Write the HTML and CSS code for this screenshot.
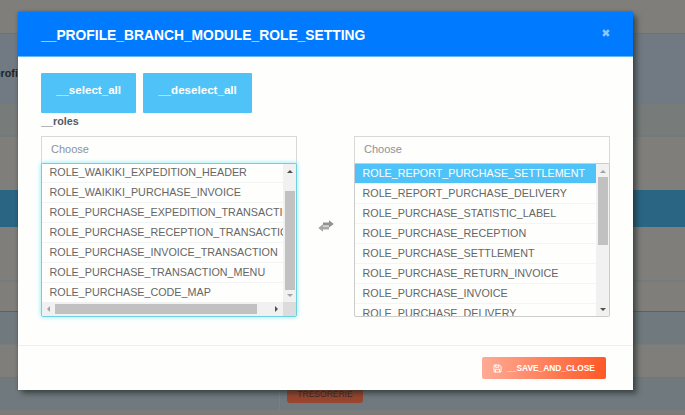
FILE: index.html
```html
<!DOCTYPE html>
<html lang="en">
<head>
<meta charset="utf-8">
<title>Role setting</title>
<link rel="stylesheet" href="styles.css">
</head>
<body>
<div class="page">
  <div class="band band-top"></div>
  <div class="band band-profile"><span>profile</span></div>
  <div class="band band-tools"></div>
  <div class="band band-plain"></div>
  <div class="band band-active"></div>
  <div class="band band-space"></div>
  <div class="band band-head"></div>
  <div class="band band-odd"></div>
  <div class="band band-even"></div>
  <div class="band band-odd band-tag"><div class="cell"><span class="tag">TRESORERIE</span></div></div>
  <div class="band band-last"></div>
</div>
<div class="modal">
  <header class="modal-header">
    <h1>__PROFILE_BRANCH_MODULE_ROLE_SETTING</h1>
    <svg class="close" viewBox="0 0 8 8"><path d="M1.2 1.2 6.8 6.8M6.8 1.2 1.2 6.8"/></svg>
  </header>
  <main class="modal-body">
    <div class="actions"><button class="select">__select_all</button><button class="deselect">__deselect_all</button></div>
    <label class="label">__roles</label>
    <div class="picker">
      <section class="side">
        <div class="search">Choose</div>
        <div class="list focused">
          <div class="rows">
            <div>ROLE_WAIKIKI_EXPEDITION_HEADER</div>
            <div>ROLE_WAIKIKI_PURCHASE_INVOICE</div>
            <div>ROLE_PURCHASE_EXPEDITION_TRANSACTION</div>
            <div>ROLE_PURCHASE_RECEPTION_TRANSACTION</div>
            <div>ROLE_PURCHASE_INVOICE_TRANSACTION</div>
            <div>ROLE_PURCHASE_TRANSACTION_MENU</div>
            <div>ROLE_PURCHASE_CODE_MAP</div>
          </div>
          <div class="vbar">
            <svg class="arrow dark" viewBox="0 0 6 3"><path d="M0 3 3 0 6 3z"/></svg>
            <i class="thumb"></i>
            <svg class="arrow" viewBox="0 0 6 3"><path d="M0 0H6L3 3z"/></svg>
          </div>
          <div class="hbar">
            <svg class="arrow-h" viewBox="0 0 3 6"><path d="M3 0V6L0 3z"/></svg>
            <i class="hthumb"></i>
            <svg class="arrow-h dark" viewBox="0 0 3 6"><path d="M0 0V6L3 3z"/></svg>
          </div>
          <div class="corner"></div>
        </div>
      </section>
      <svg class="swap" viewBox="0 0 16 12"><path class="front" d="M5 2.5H11V.2L15.8 4 11 7.6V5.4H5z"/><path class="back" d="M11 6.5H5V4.3L.2 8 5 11.8V9.5H11z"/></svg>
      <section class="side">
        <div class="search">Choose</div>
        <div class="list">
          <div class="rows">
            <div class="selected">ROLE_REPORT_PURCHASE_SETTLEMENT</div>
            <div>ROLE_REPORT_PURCHASE_DELIVERY</div>
            <div>ROLE_PURCHASE_STATISTIC_LABEL</div>
            <div>ROLE_PURCHASE_RECEPTION</div>
            <div>ROLE_PURCHASE_SETTLEMENT</div>
            <div>ROLE_PURCHASE_RETURN_INVOICE</div>
            <div>ROLE_PURCHASE_INVOICE</div>
            <div>ROLE_PURCHASE_DELIVERY</div>
          </div>
          <div class="vbar">
            <svg class="arrow" viewBox="0 0 6 3"><path d="M0 3 3 0 6 3z"/></svg>
            <i class="thumb"></i>
            <svg class="arrow dark" viewBox="0 0 6 3"><path d="M0 0H6L3 3z"/></svg>
          </div>
        </div>
      </section>
    </div>
  </main>
  <footer class="modal-footer">
    <button class="save"><svg viewBox="0 0 9 9"><path d="M1 1H6.5L8 2.5V8H1zM2.7 1V3.3H5.8V1M2.5 8V5.3H6.5V8"/></svg><span>__SAVE_AND_CLOSE</span></button>
  </footer>
</div>
</body>
</html>
```
FILE: styles.css
```css
* { box-sizing: border-box; }
body { margin: 0; width: 685px; height: 415px; overflow: hidden; background: #7f7e7b; font-family: "Liberation Sans", Arial, sans-serif; }
button { font-family: inherit; border: 0; margin: 0; padding: 0; }
.band { width: 100%; }
.band-top { height: 33px; background: #7f7e7b; }
.band-profile { height: 70px; background: #717a82; border-top: 1px solid #6b7579; font-size: 10.75px; font-weight: bold; color: #202325; line-height: 12px; padding-top: 33px; }
.band-profile span { display: block; margin-left: -6px; }
.band-tools { height: 34px; background: #777b7a; border-top: 1px solid #727a7d; border-bottom: 2px solid #727a7e; }
.band-plain { height: 53px; background: #7f7e7b; }
.band-active { height: 37px; background: #2a6583; }
.band-space { height: 54px; background: #7f7e7b; border-bottom: 1px solid #747b7d; }
.band-head { height: 31px; background: #7f7e7b; border-top: 1px solid #747b7d; border-bottom: 1px solid #5d6060; }
.band-odd { height: 33px; background: #707a7e; border-bottom: 1px solid #787c7c; }
.band-even { height: 33px; background: #7f7e7b; border-bottom: 1px solid #6d777b; }
.band-last { height: 7px; background: #7c7c7a; }
.cell { margin-left: 279px; height: 32px; padding: 7px 0 0 7px; border-left: 1px solid #7a8081; }
.tag { display: block; width: 76px; height: 18px; border-radius: 3px; background: #99452f; color: #3c2a25; font-size: 8.5px; line-height: 19px; text-align: center; }
.modal { position: absolute; left: 18px; top: 12px; width: 615px; height: 378px; display: flex; flex-direction: column; background: #fefefd; box-shadow: 4px 4px 5px rgba(25,35,35,.5), 0 0 3px rgba(30,35,35,.4); }
.modal-header { height: 45px; display: flex; justify-content: space-between; align-items: center; padding: 0 23px; background: #007bff; border-bottom: 1px solid #66b9ef; }
h1 { margin: 0; padding-top: 1px; font-size: 13.83px; line-height: 16px; color: #fff; white-space: nowrap; }
.close { width: 8px; height: 8px; margin-top: -2px; fill: none; stroke: #8fc5fb; stroke-width: 2.6; }
.modal-body { height: 288px; padding: 16px 23px 0; }
.actions { display: flex; gap: 7px; height: 40px; }
.actions button { height: 40px; padding-bottom: 8px; border-radius: 1px; background: #4fc3f7; color: #fff; font-size: 11.6px; font-weight: bold; }
.select { width: 95px; }
.deselect { width: 109px; }
.label { display: block; height: 23px; padding-top: 1px; font-size: 10.75px; line-height: 14px; font-weight: bold; color: #505b66; }
.picker { display: flex; }
.side { width: 256px; flex: none; }
.search { height: 27px; border: 1px solid #d9d9d9; border-bottom: 0; padding-left: 9px; font-size: 11px; line-height: 25px; color: #8a939c; }
.list { display: grid; grid-template-columns: 1fr 13px; height: 154px; border: 1px solid #ccc; border-radius: 0 0 2px 2px; overflow: hidden; }
.rows { overflow: hidden; font-size: 10.75px; line-height: 19px; color: #666; white-space: nowrap; }
.rows div { height: 20px; padding-left: 7.5px; border-bottom: 1px solid #f2f4f5; }
.rows .selected { background: #4fc3f7; color: #fff; }
.focused { grid-template-rows: 138px 14px; border-color: #70cfe0; box-shadow: 0 0 5px #8ceaf5; }
.focused .rows div:first-child { height: 19px; line-height: 17px; }
.vbar { display: flex; flex-direction: column; align-items: center; background: #f1f1f1; padding: 6px 0 5px; }
.arrow { width: 6px; height: 3px; fill: #a3a3a3; flex: none; }
.arrow.dark, .arrow-h.dark { fill: #505050; }
.thumb { width: 10px; height: 68px; margin: 4px 0 auto; background: #c1c1c1; }
.focused .thumb { height: 99px; margin-top: 18px; }
.hbar { display: flex; align-items: center; background: #f1f1f1; padding: 0 5px; }
.arrow-h { width: 3px; height: 6px; fill: #a3a3a3; flex: none; }
.hthumb { width: 202px; height: 10px; margin: 0 auto 0 5px; background: #c1c1c1; }
.corner { background: #dcdcdc; }
.swap { width: 16px; height: 12px; margin: 84px 20px 0 21px; flex: none; }
.front { fill: #929292; }
.back { fill: #a8a8a8; }
.modal-footer { flex: 1; display: flex; justify-content: flex-end; padding: 11px 27px 0; border-top: 1px solid #e9f1f5; }
.save { width: 124px; height: 22px; display: flex; align-items: center; justify-content: center; gap: 5px; border-radius: 2px; background: linear-gradient(90deg, #ffab95, #ff5826); color: #fff; font-size: 8.4px; font-weight: bold; }
.save svg { width: 9px; height: 9px; fill: none; stroke: #fff; stroke-width: 1; }
```
